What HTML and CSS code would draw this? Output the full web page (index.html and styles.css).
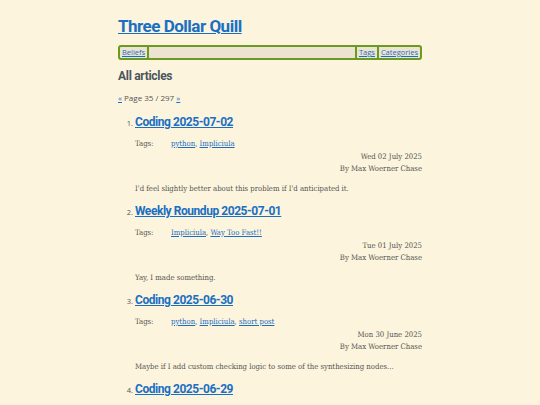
FILE: index.html
```html
<!DOCTYPE html>
<html lang="en">
<head>
<meta charset="utf-8">
<title>Three Dollar Quill</title>
<link rel="stylesheet" href="styles.css">
</head>
<body>
<div class="page">
  <header class="site-header">
    <h1 class="site-title"><a href="#">Three Dollar Quill</a></h1>
    <nav class="nav">
      <a class="nav-item" href="#">Beliefs</a>
      <span class="nav-fill"></span>
      <a class="nav-item nav-right" href="#">Tags</a>
      <a class="nav-item nav-right" href="#">Categories</a>
    </nav>
  </header>
  <main>
    <h2 class="section-title">All articles</h2>
    <p class="pager"><a href="#">«</a> Page 35 / 297 <a href="#">»</a></p>
    <ol class="articles">
      <li class="article">
        <h3 class="article-title"><a href="#">Coding 2025-07-02</a></h3>
        <div class="tags"><span class="tags-label">Tags:</span><span class="tags-list"><a href="#">python</a>, <a href="#">Impliciula</a></span></div>
        <div class="meta">
          <div>Wed 02 July 2025</div>
          <div>By Max Woerner Chase</div>
        </div>
        <p class="summary">I'd feel slightly better about this problem if I'd anticipated it.</p>
      </li>
      <li class="article">
        <h3 class="article-title"><a href="#">Weekly Roundup 2025-07-01</a></h3>
        <div class="tags"><span class="tags-label">Tags:</span><span class="tags-list"><a href="#">Impliciula</a>, <a href="#">Way Too Fast!!</a></span></div>
        <div class="meta">
          <div>Tue 01 July 2025</div>
          <div>By Max Woerner Chase</div>
        </div>
        <p class="summary">Yay, I made something.</p>
      </li>
      <li class="article">
        <h3 class="article-title"><a href="#">Coding 2025-06-30</a></h3>
        <div class="tags"><span class="tags-label">Tags:</span><span class="tags-list"><a href="#">python</a>, <a href="#">Impliciula</a>, <a href="#">short post</a></span></div>
        <div class="meta">
          <div>Mon 30 June 2025</div>
          <div>By Max Woerner Chase</div>
        </div>
        <p class="summary">Maybe if I add custom checking logic to some of the synthesizing nodes...</p>
      </li>
      <li class="article">
        <h3 class="article-title"><a href="#">Coding 2025-06-29</a></h3>
      </li>
    </ol>
  </main>
</div>
</body>
</html>
```
FILE: styles.css
```css
html, body {
  margin: 0;
  padding: 0;
  background: #fcf4dc;
}
body {
  font-family: "DejaVu Serif Condensed", "DejaVu Serif", serif;
  font-size: 7.7px;
  color: #555;
}
a {
  color: #1a6fc4;
}
.page {
  width: 304px;
  margin: 0 auto;
  padding-top: 15px;
}
.site-title,
.section-title,
.article-title {
  font-family: "Roboto", sans-serif;
  font-weight: 700;
}
.site-title {
  font-size: 17px;
  letter-spacing: -0.5px;
  line-height: 22px;
  margin: 0 0 8px 0;
}
.site-title a {
  color: #1a6fc4;
}
.nav {
  display: flex;
  align-items: stretch;
  border: 2px solid #6b9a21;
  border-radius: 3px;
  background: #ece4d0;
  font-family: "Open Sans", sans-serif;
  font-size: 7.5px;
  height: 11px;
}
.nav-item {
  display: flex;
  align-items: center;
  padding: 0 2px;
  line-height: 11px;
}
.nav-item:first-child {
  border-right: 2px solid #6b9a21;
}
.nav-fill {
  flex: 1;
}
.nav-right {
  border-left: 2px solid #6b9a21;
}
.section-title {
  font-size: 12px;
  letter-spacing: -0.3px;
  color: #4a5560;
  margin: 8px 0 0 0;
  line-height: 16px;
}
.pager {
  font-family: "Open Sans", sans-serif;
  font-size: 8px;
  color: #555;
  margin: 8px 0 0 0;
  line-height: 12px;
}
.articles {
  margin: 10px 0 0 0;
  padding-left: 17px;
}
.article {
  margin-bottom: 8px;
}
.article::marker {
  font-family: "Open Sans", sans-serif;
  font-size: 7.5px;
  letter-spacing: 0;
  color: #555;
}
.article-title {
  font-size: 12px;
  letter-spacing: -0.45px;
  line-height: 16px;
  margin: 0;
}
.tags {
  display: flex;
  margin-top: 8px;
  line-height: 12px;
}
.tags-label {
  width: 36px;
}
.meta {
  text-align: right;
  line-height: 12px;
  margin-top: 1px;
}
.summary {
  margin: 8px 0 0 0;
  line-height: 12px;
}
```
